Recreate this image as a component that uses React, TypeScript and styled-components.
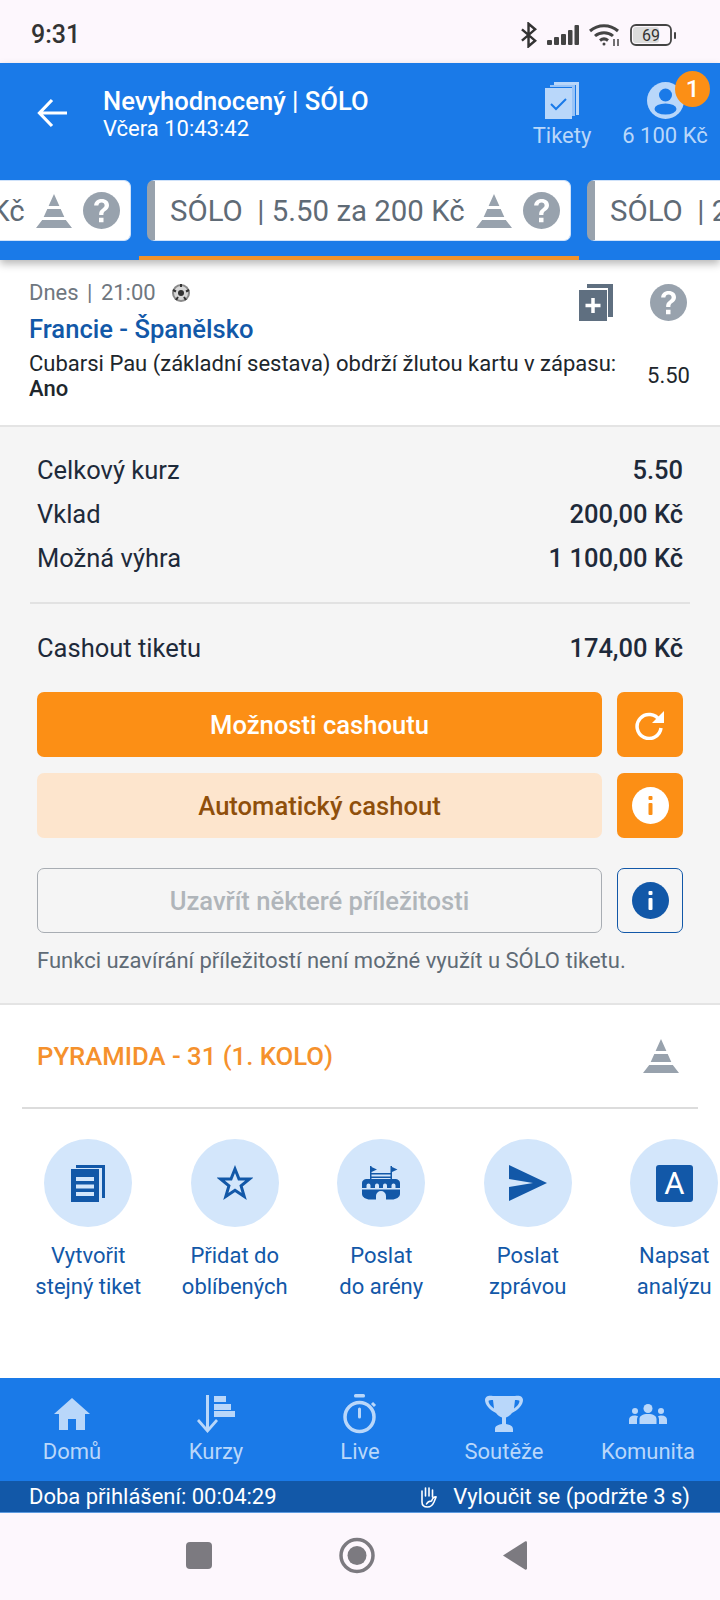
import styled, { createGlobalStyle } from 'styled-components';

const Global = createGlobalStyle`
  html, body { margin: 0; padding: 0; background: #fff; }
  * { box-sizing: border-box; }
`;

const Page = styled.div`
  width: 720px;
  height: 1600px;
  display: flex;
  flex-direction: column;
  overflow: hidden;
  font-family: Roboto, "Noto Sans", sans-serif;
  background: #fff;
`;

const StatusBar = styled.div`
  height: 63px;
  flex: none;
  background: #fdf7fd;
  display: flex;
  align-items: center;
  justify-content: space-between;
  padding: 6px 44px 0 31px;
  color: #333;
`;
const Clock = styled.span`
  font-size: 25px;
  font-weight: 500;
`;
const StatusIcons = styled.div`
  display: flex;
  align-items: center;
  gap: 10px;
`;

const Header = styled.div`
  height: 197px;
  flex: none;
  background: #1a7ae8;
  box-shadow: 0 4px 8px rgba(0, 0, 0, 0.28);
  position: relative;
  z-index: 2;
  display: flex;
  flex-direction: column;
`;
const TopRow = styled.div`
  height: 117px;
  flex: none;
  display: flex;
  align-items: flex-start;
  padding: 19px 0 0 37px;
`;
const BackIcon = styled.svg`
  width: 30px;
  height: 30px;
  margin: 16px 36px 0 0;
  flex: none;
`;
const Titles = styled.div`
  flex: 1;
  color: #fff;
`;
const TicketTitle = styled.div`
  font-size: 25.6px;
  font-weight: 500;
  line-height: 30px;
  margin-top: 4px;
`;
const TicketDate = styled.div`
  font-size: 22px;
  line-height: 26px;
`;
const HeadAction = styled.div<{ $width: number }>`
  width: ${p => p.$width}px;
  flex: none;
  display: flex;
  flex-direction: column;
  align-items: center;
  color: #b9d7fa;
  font-size: 22px;
  position: relative;
`;
const HeadLabel = styled.span`
  line-height: 26px;
  margin-top: 4px;
  white-space: nowrap;
`;
const Badge = styled.span`
  position: absolute;
  top: -11px;
  right: 10px;
  width: 35px;
  height: 36px;
  border-radius: 50%;
  background: #fc8f15;
  color: #fff;
  font-size: 24px;
  font-weight: 500;
  display: flex;
  align-items: center;
  justify-content: center;
`;

const TabTrack = styled.div`
  display: flex;
  margin-left: -301px;
  height: 80px;
`;
const TabSlot = styled.div<{ $active?: boolean }>`
  flex: none;
  width: 440px;
  height: 80px;
  padding: 0 8px;
  border-bottom: 4px solid ${p => (p.$active ? '#f0922a' : 'transparent')};
`;
const TabCard = styled.div`
  height: 61px;
  background: #fff;
  border-radius: 7px;
  border: 1px solid #cfe2fa;
  border-left: 8px solid #98a2ad;
  display: flex;
  align-items: center;
  padding-left: 15px;
  gap: 12px;
  color: #5f6b76;
  font-size: 29.4px;
  white-space: pre;
  overflow: hidden;
`;
const TabText = styled.span`
  flex: 1;
  min-width: 0;
`;
const TabIcons = styled.span`
  display: flex;
  align-items: center;
  gap: 11px;
  margin-right: 10px;
`;

const EventBlock = styled.div`
  height: 167px;
  flex: none;
  background: #fff;
  border-bottom: 2px solid #e4e4e4;
  display: flex;
  padding: 20px 30px 0 29px;
  position: relative;
`;
const EventMain = styled.div`
  flex: 1;
  min-width: 0;
`;
const EventMeta = styled.div`
  display: flex;
  align-items: center;
  gap: 16px;
  color: #6f7780;
  font-size: 22px;
  word-spacing: 3px;
  line-height: 26px;
`;
const Teams = styled.div`
  color: #1258a8;
  font-size: 25.6px;
  font-weight: 500;
  line-height: 30px;
  margin-top: 8px;
`;
const Market = styled.div`
  color: #20262c;
  font-size: 22px;
  line-height: 25px;
  margin-top: 7px;
  white-space: nowrap;
`;
const Pick = styled.div`
  color: #20262c;
  font-size: 22px;
  font-weight: 500;
  line-height: 25px;
`;
const EventSide = styled.div`
  width: 120px;
  flex: none;
  display: flex;
  flex-direction: column;
  align-items: flex-end;
`;
const EventIcons = styled.div`
  display: flex;
  gap: 37px;
  margin-right: 3px;
  height: 38px;
  margin-top: 4px;
`;
const EventOdds = styled.div`
  color: #20262c;
  font-size: 22px;
  line-height: 26px;
  margin-top: 41px;
`;

const Summary = styled.div`
  height: 578px;
  flex: none;
  background: #f5f5f5;
  border-bottom: 2px solid #e4e4e4;
  padding: 21px 37px 0;
  display: flex;
  flex-direction: column;
`;
const SumRow = styled.div`
  height: 44px;
  flex: none;
  display: flex;
  align-items: center;
  justify-content: space-between;
  color: #1e2a3a;
  font-size: 25.5px;
`;
const SumValue = styled.span`
  font-weight: 500;
`;
const SumLine = styled.div`
  height: 2px;
  flex: none;
  background: #e2e2e2;
  margin: 22px -7px 22px;
`;
const ButtonRow = styled.div<{ $mt: number }>`
  display: flex;
  gap: 15px;
  height: 65px;
  flex: none;
  margin-top: ${p => p.$mt}px;
`;
const WideButton = styled.div<{ $kind: 'solid' | 'soft' | 'off' }>`
  flex: 1;
  border-radius: 7px;
  display: flex;
  align-items: center;
  justify-content: center;
  font-size: 25.6px;
  font-weight: 500;
  background: ${p => (p.$kind === 'solid' ? '#fc8f15' : p.$kind === 'soft' ? '#fde5cd' : 'transparent')};
  color: ${p => (p.$kind === 'solid' ? '#fff' : p.$kind === 'soft' ? '#8f4f0b' : '#b0b5ba')};
  border: ${p => (p.$kind === 'off' ? '1.5px solid #a8adb3' : 'none')};
`;
const SquareButton = styled.div<{ $outline?: boolean }>`
  width: 66px;
  flex: none;
  border-radius: 7px;
  display: flex;
  align-items: center;
  justify-content: center;
  background: ${p => (p.$outline ? 'transparent' : '#fc8f15')};
  border: ${p => (p.$outline ? '1.5px solid #1258a8' : 'none')};
`;
const Note = styled.div`
  color: #5f6b76;
  font-size: 22px;
  line-height: 26px;
  margin-top: 15px;
  white-space: nowrap;
`;

const Pyramid = styled.div`
  height: 104px;
  flex: none;
  margin: 0 22px;
  border-bottom: 2px solid #dcdcdc;
  display: flex;
  align-items: center;
  justify-content: space-between;
  padding: 0 19px 0 15px;
`;
const PyramidTitle = styled.span`
  color: #f5912c;
  font-size: 25.7px;
  font-weight: 500;
`;

const Actions = styled.div`
  flex: 1;
  display: flex;
  padding: 30px 0 0 15px;
`;
const ActionItem = styled.div`
  width: 146.5px;
  flex: none;
  display: flex;
  flex-direction: column;
  align-items: center;
  color: #1258a8;
  font-size: 22px;
  line-height: 31px;
  text-align: center;
  white-space: nowrap;
`;
const ActionCircle = styled.div`
  width: 88px;
  height: 88px;
  border-radius: 50%;
  background: #d3e6fb;
  display: flex;
  align-items: center;
  justify-content: center;
  margin-bottom: 13px;
`;
const LetterIcon = styled.div`
  width: 37px;
  height: 37px;
  border-radius: 3px;
  background: #1258a8;
  color: #fff;
  font-size: 31px;
  line-height: 37px;
  text-align: center;
`;

const BottomNav = styled.div`
  height: 103px;
  flex: none;
  background: #1a7ae8;
  display: grid;
  grid-template-columns: repeat(5, 1fr);
  padding-top: 15px;
`;
const NavItem = styled.div`
  display: flex;
  flex-direction: column;
  align-items: center;
  color: #b9d7fa;
  font-size: 22px;
`;
const NavIcon = styled.div`
  height: 42px;
  display: flex;
  align-items: center;
  justify-content: center;
`;
const NavLabel = styled.span`
  line-height: 26px;
  margin-top: 4px;
`;

const SessionBar = styled.div`
  height: 32px;
  flex: none;
  background: #1258a8;
  color: #fff;
  font-size: 22px;
  display: flex;
  align-items: center;
  justify-content: space-between;
  padding: 0 30px 0 29px;
  border-bottom: 1px solid #5d9be0;
`;
const Exclude = styled.span`
  display: flex;
  align-items: center;
  gap: 16px;
`;

const AndroidBar = styled.div`
  flex: none;
  height: 87px;
  background: #fdf7fd;
  display: flex;
  align-items: center;
  justify-content: center;
  padding: 0 7px 2px 0;
  gap: 127px;
`;

const PyramidIcon = ({ color = '#98a2ad' }: { color?: string }) => (
  <svg width="36" height="36" viewBox="0 0 36 36">
    <path fill={color} d="M18 1l5.400 12H12.600zM11.300 16h13.400l3.600 8H7.700zM6.200 27h23.600l6.200 8H0z" />
  </svg>
);

const QuestionIcon = () => (
  <svg width="37" height="37" viewBox="0 0 37 37">
    <circle cx="18.5" cy="18.5" r="18.5" fill="#98a2ad" />
    <g transform="translate(18.5 18.5) scale(1.25) translate(-18.5 -18.2)">
      <path d="M12.6 14.2c.2-3.4 2.6-5.3 6-5.3 3.5 0 5.900 2 5.900 5 0 2.200-1.200 3.400-2.700 4.500-1.400 1-1.800 1.600-1.800 3.300h-3.400c-.1-2.500.7-3.700 2.500-5 1.300-.9 1.900-1.600 1.900-2.700 0-1.300-1-2.200-2.400-2.200-1.500 0-2.500.9-2.600 2.400z" fill="#fff" />
      <rect x="16.500" y="24" width="3.600" height="3.600" fill="#fff" />
    </g>
  </svg>
);

const InfoIcon = ({ bg, fg }: { bg: string; fg: string }) => (
  <svg width="37" height="37" viewBox="0 0 37 37">
    <circle cx="18.500" cy="18.500" r="18.500" fill={bg} />
    <rect x="16.500" y="9" width="4" height="4" rx="1" fill={fg} />
    <rect x="16.500" y="16" width="4" height="12" rx="1" fill={fg} />
  </svg>
);

const actions = [
  {
    lines: ['Vytvořit', 'stejný tiket'],
    icon: (
      <svg width="34" height="37" viewBox="0 0 34 37" fill="#1258a8">
        <path d="M5 0h29v33h-3V3H5z" />
        <path d="M0 4h28v33H0z" />
        <path fill="#d3e6fb" d="M5 12h18v4H5zM5 19.500h18v4H5zM5 27h18v4H5z" />
      </svg>
    ),
  },
  {
    lines: ['Přidat do', 'oblíbených'],
    icon: (
      <svg width="36" height="36" viewBox="0 0 36 36">
        <path d="M18 4l4 10h10.500l-8.400 6.800 3.100 10.700L18 25.300 8.800 31.500l3.100-10.700L3.500 14H14z" fill="none" stroke="#1258a8" strokeWidth="3" />
      </svg>
    ),
  },
  {
    lines: ['Poslat', 'do arény'],
    icon: (
      <svg width="38" height="34" viewBox="0 0 38 34" fill="#1258a8">
        <path d="M8 0h1.500v1l5.500 2.500L9.500 6v7H8zM28.500 0H30v1l5.500 2.500L30 6v7h-1.500z" />
        <path d="M9 7h20v1.500H9zM9 10.500h20V12H9z" />
        <path fillRule="evenodd" d="M4 13h30c2.500.5 4 2 4 4v5H0v-5c0-2 1.500-3.500 4-4zM6.500 17.500a2 2 0 0 0-2 2V22h4v-2.500a2 2 0 0 0-2-2zM15 17.500a2 2 0 0 0-2 2V22h4v-2.500a2 2 0 0 0-2-2zM23 17.500a2 2 0 0 0-2 2V22h4v-2.500a2 2 0 0 0-2-2zM31.500 17.500a2 2 0 0 0-2 2V22h4v-2.500a2 2 0 0 0-2-2z" />
        <path d="M0 23.500h38V28c0 3-4 5.500-8 5.500h-6V30a5 5 0 0 0-10 0v3.500H8c-4 0-8-2.500-8-5.500z" />
      </svg>
    ),
  },
  {
    lines: ['Poslat', 'zprávou'],
    icon: (
      <svg width="38" height="36" viewBox="0 0 38 36" fill="#1258a8">
        <path d="M0 0l38 18L0 36V22l24-4L0 14z" />
      </svg>
    ),
  },
  {
    lines: ['Napsat', 'analýzu'],
    icon: <LetterIcon>A</LetterIcon>,
  },
];

const navItems = [
  {
    label: 'Domů',
    icon: (
      <svg width="36" height="32" viewBox="0 0 36 32" fill="#b9d7fa">
        <path d="M18 0L0 16h5v16h9V21h8v11h9V16h5z" />
      </svg>
    ),
  },
  {
    label: 'Kurzy',
    icon: (
      <svg width="38" height="38" viewBox="0 0 38 38" fill="#b9d7fa">
        <path d="M9 0h3v32l7-8 2 2L10.500 38 0 26l2-2 7 8z" />
        <path d="M17 1h12v6H17zM17 9h17v6H17zM17 16h21v6H17z" />
      </svg>
    ),
  },
  {
    label: 'Live',
    icon: (
      <svg width="36" height="40" viewBox="0 0 36 40" fill="none">
        <rect x="12" y="0" width="11" height="3.500" rx="1.500" fill="#b9d7fa" />
        <circle cx="17.500" cy="23" r="14.500" stroke="#b9d7fa" strokeWidth="3.500" />
        <path d="M17.500 15v8" stroke="#b9d7fa" strokeWidth="3" strokeLinecap="round" />
        <path d="M30 9l3 3" stroke="#b9d7fa" strokeWidth="3" />
      </svg>
    ),
  },
  {
    label: 'Soutěže',
    icon: (
      <svg width="38" height="38" viewBox="0 0 38 38" fill="#b9d7fa">
        <path fillRule="evenodd" d="M8 1c-4-1-8 0-8 4 0 5 5 10 11 13 1.500 2 3.500 3.500 6 4.500V29c-3 .5-7 1.500-7 5v3h18v-3c0-3.500-4-4.500-7-5v-6.500c2.500-1 4.500-2.500 6-4.500 6-3 11-8 11-13 0-4-4-5-8-4H8zM8 5c-2 0-4.500 0-4.500 1 0 2.500 2.500 5.500 5.500 7.500zM30 5c2 0 4.500 0 4.500 1 0 2.500-2.500 5.500-5.500 7.500z" />
      </svg>
    ),
  },
  {
    label: 'Komunita',
    icon: (
      <svg width="38" height="20" viewBox="0 0 38 20" fill="#b9d7fa">
        <circle cx="19" cy="4.500" r="4.500" />
        <circle cx="6" cy="7" r="3" />
        <circle cx="32" cy="7" r="3" />
        <path d="M10.500 20v-5c0-3 3-5 8.500-5s8.500 2 8.500 5v5zM0 20v-4c0-3 2-4.500 5.500-4.500 1.500 0 2.500.2 3.500.7-.6 1-1 2-1 3V20zM38 20v-4c0-3-2-4.500-5.500-4.500-1.500 0-2.500.2-3.500.7.6 1 1 2 1 3V20z" />
      </svg>
    ),
  },
];

const App = () => {
  return (
    <Page>
      <Global />
      <StatusBar>
        <Clock>9:31</Clock>
        <StatusIcons>
          <svg width="16" height="26" viewBox="0 0 17 26" fill="none" stroke="#333" strokeWidth="2.600">
            <path d="M1 7l14 12-7 6V1l7 6L1 19" />
          </svg>
          <svg width="32" height="20" viewBox="0 0 32 20" fill="#444">
            <rect x="0" y="15" width="5" height="5" rx="1" />
            <rect x="7" y="12" width="5" height="8" rx="1" />
            <rect x="14" y="9" width="5" height="11" rx="1" />
            <rect x="21" y="5" width="4.500" height="15" rx="1" />
            <rect x="27.500" y="0" width="4.500" height="20" rx="1" />
          </svg>
          <svg width="31" height="22" viewBox="0 0 31 22" fill="none" stroke="#444" strokeWidth="3">
            <path d="M1 7c8-7 20-7 28 0M6 12c5-4.500 13-4.500 18 0M11 16.500c2.500-2 5.500-2 8 0" />
            <circle cx="15" cy="20" r="1.500" fill="#444" stroke="none" />
            <path d="M25 15v7M29 15v7" strokeWidth="1.500" />
          </svg>
          <svg width="46" height="22" viewBox="0 0 46 22">
            <rect x="1" y="1" width="40" height="20" rx="5" fill="#fdf7fd" stroke="#444" strokeWidth="1.800" />
            <rect x="3" y="3" width="26" height="16" rx="3" fill="#dcdcdc" />
            <rect x="44" y="8" width="2" height="7" rx="1" fill="#444" />
            <text x="21" y="17" textAnchor="middle" fontSize="16" fill="#333" fontFamily="Roboto, sans-serif">69</text>
          </svg>
        </StatusIcons>
      </StatusBar>

      <Header>
        <TopRow>
          <BackIcon viewBox="0 0 30 30" fill="none" stroke="#fff" strokeWidth="3.200">
            <path d="M30 15H3M15 2L2.500 15 15 28" />
          </BackIcon>
          <Titles>
            <TicketTitle>Nevyhodnocený | SÓLO</TicketTitle>
            <TicketDate>Včera 10:43:42</TicketDate>
          </Titles>
          <HeadAction $width={96}>
            <svg width="34" height="37" viewBox="0 0 34 37">
              <path d="M9 0h25v33h-3V3H9z" fill="#b9d7fa" />
              <path d="M5 3h25v31h-3V5H5z" fill="#b9d7fa" opacity="0.8" />
              <rect x="0" y="6" width="27" height="31" fill="#b9d7fa" />
              <path d="M6 22l5 5 10-10" fill="none" stroke="#1a7ae8" strokeWidth="2" />
            </svg>
            <HeadLabel>Tikety</HeadLabel>
          </HeadAction>
          <HeadAction $width={110}>
            <svg width="37" height="37" viewBox="0 0 37 37">
              <circle cx="18.500" cy="18.500" r="18.500" fill="#b9d7fa" />
              <circle cx="18.500" cy="13" r="6.500" fill="#1a7ae8" />
              <ellipse cx="18.500" cy="27" rx="11" ry="5.500" fill="#1a7ae8" />
            </svg>
            <HeadLabel>6 100 Kč</HeadLabel>
            <Badge>1</Badge>
          </HeadAction>
        </TopRow>
        <TabTrack>
          <TabSlot>
            <TabCard>
              <TabText>SÓLO  | 5.50 za 200 Kč</TabText>
              <TabIcons><PyramidIcon /><QuestionIcon /></TabIcons>
            </TabCard>
          </TabSlot>
          <TabSlot $active>
            <TabCard>
              <TabText>SÓLO  | 5.50 za 200 Kč</TabText>
              <TabIcons><PyramidIcon /><QuestionIcon /></TabIcons>
            </TabCard>
          </TabSlot>
          <TabSlot>
            <TabCard>
              <TabText>SÓLO  | 2.00 za 200 Kč</TabText>
            </TabCard>
          </TabSlot>
        </TabTrack>
      </Header>

      <EventBlock>
        <EventMain>
          <EventMeta>
            <span>Dnes | 21:00</span>
            <svg width="18" height="18" viewBox="0 0 18 18">
              <circle cx="9" cy="9" r="9" fill="#8a8a8a" />
              <circle cx="9" cy="9" r="7" fill="#d8d8d8" />
              <circle cx="9" cy="9" r="3" fill="#333" />
              <path d="M9 0v3M1 6l3 1.500M17 6l-3 1.500M4 16l2-3M14 16l-2-3" stroke="#333" strokeWidth="2" />
            </svg>
          </EventMeta>
          <Teams>Francie - Španělsko</Teams>
          <Market>Cubarsi Pau (základní sestava) obdrží žlutou kartu v zápasu:</Market>
          <Pick>Ano</Pick>
        </EventMain>
        <EventSide>
          <EventIcons>
            <svg width="34" height="37" viewBox="0 0 34 37">
              <path d="M8 0h26v33h-5V4H8z" fill="#5f6f80" />
              <rect x="0" y="6" width="28" height="31" fill="#5f6f80" />
              <path d="M14 14v15M6.500 21.500h15" stroke="#fff" strokeWidth="3.500" />
            </svg>
            <QuestionIcon />
          </EventIcons>
          <EventOdds>5.50</EventOdds>
        </EventSide>
      </EventBlock>

      <Summary>
        <SumRow><span>Celkový kurz</span><SumValue>5.50</SumValue></SumRow>
        <SumRow><span>Vklad</span><SumValue>200,00 Kč</SumValue></SumRow>
        <SumRow><span>Možná výhra</span><SumValue>1 100,00 Kč</SumValue></SumRow>
        <SumLine />
        <SumRow><span>Cashout tiketu</span><SumValue>174,00 Kč</SumValue></SumRow>
        <ButtonRow $mt={22}>
          <WideButton $kind="solid">Možnosti cashoutu</WideButton>
          <SquareButton>
            <svg width="30" height="30" viewBox="0 0 30 30" fill="none">
              <path d="M24.500 10.500A12 12 0 1 0 26 18" stroke="#fff" strokeWidth="3.500" />
              <path d="M29 1v12H17z" fill="#fff" />
            </svg>
          </SquareButton>
        </ButtonRow>
        <ButtonRow $mt={16}>
          <WideButton $kind="soft">Automatický cashout</WideButton>
          <SquareButton><InfoIcon bg="#fff" fg="#fc8f15" /></SquareButton>
        </ButtonRow>
        <ButtonRow $mt={30}>
          <WideButton $kind="off">Uzavřít některé příležitosti</WideButton>
          <SquareButton $outline><InfoIcon bg="#1258a8" fg="#fff" /></SquareButton>
        </ButtonRow>
        <Note>Funkci uzavírání příležitostí není možné využít u SÓLO tiketu.</Note>
      </Summary>

      <Pyramid>
        <PyramidTitle>PYRAMIDA - 31 (1. KOLO)</PyramidTitle>
        <PyramidIcon />
      </Pyramid>

      <Actions>
        {actions.map(a => (
          <ActionItem key={a.lines[0] + a.lines[1]}>
            <ActionCircle>{a.icon}</ActionCircle>
            {a.lines.map(l => <div key={l}>{l}</div>)}
          </ActionItem>
        ))}
      </Actions>

      <BottomNav>
        {navItems.map(n => (
          <NavItem key={n.label}>
            <NavIcon>{n.icon}</NavIcon>
            <NavLabel>{n.label}</NavLabel>
          </NavItem>
        ))}
      </BottomNav>

      <SessionBar>
        <span>Doba přihlášení: 00:04:29</span>
        <Exclude>
          <svg width="18" height="22" viewBox="0 0 18 22" fill="none" stroke="#fff" strokeWidth="1.600" strokeLinecap="round">
            <path d="M3 12V5M6.500 10V2M10 10V2M13.500 11V4M3 11v5c0 3.500 2.500 5 5.500 5s5-1.500 6.500-5l2-5c-1.500-.5-2.500 0-3.500 2l-1 2c-2 0-4 1-5 3" />
          </svg>
          <span>Vyloučit se (podržte 3 s)</span>
        </Exclude>
      </SessionBar>

      <AndroidBar>
        <svg width="26" height="27" viewBox="0 0 26 27"><rect width="26" height="27" rx="4" fill="#7c7a80" /></svg>
        <svg width="36" height="37" viewBox="0 0 36 37">
          <circle cx="18" cy="18.500" r="16" fill="none" stroke="#7c7a80" strokeWidth="3.500" />
          <circle cx="18" cy="18.500" r="9.500" fill="#7c7a80" />
        </svg>
        <svg width="25" height="31" viewBox="0 0 25 31"><path d="M23 1.500L1 15.500l22 14c1 .5 2 0 2-1V2.500c0-1-1-1.500-2-1z" fill="#7c7a80" /></svg>
      </AndroidBar>
    </Page>
  );
};

export default App;
